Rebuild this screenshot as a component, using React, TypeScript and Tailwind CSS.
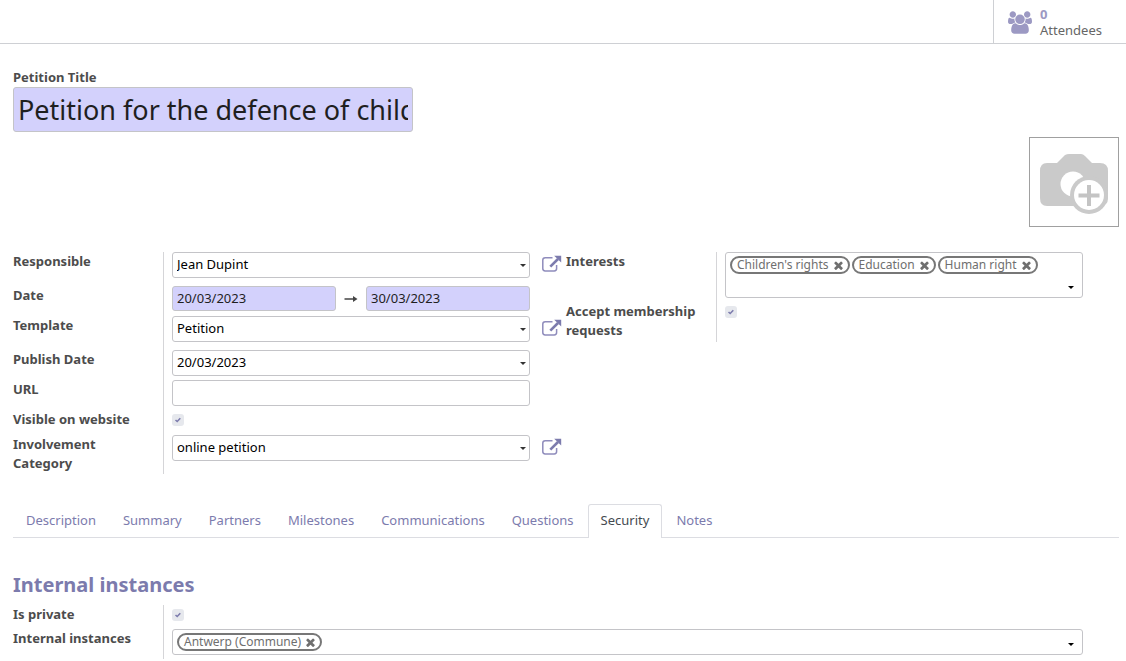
import React from "react";

const controlBase =
  "block w-full rounded-[3px] border border-[#c4c4c8] px-1 pb-0.5 text-[13px] leading-5 outline-none";

function UsersIcon() {
  return (
    <svg viewBox="64 0 1920 1792" className="h-[23px] w-6 shrink-0" fill="#9c99c3" aria-hidden="true">
      <path d="M657 896q-162 5-265 128h-134q-82 0-138-40.500t-56-118.500q0-353 124-353 6 0 43.500 21t97.500 42.500 119 21.500q67 0 133-23-5 37-5 66 0 139 81 256zm1071 637q0 120-73 189.500t-194 69.500h-874q-121 0-194-69.500t-73-189.500q0-53 3.500-103.500t14-109 26.500-108.500 43-97.500 62-81 85.500-53.500 111.500-20q10 0 43 21.500t73 48 107 48 135 21.500 135-21.500 107-48 73-48 43-21.500q61 0 111.500 20t85.500 53.500 62 81 43 97.500 26.500 108.500 14 109 3.500 103.500zm-1024-1277q0 106-75 181t-181 75-181-75-75-181 75-181 181-75 181 75 75 181zm704 384q0 159-112.500 271.500t-271.500 112.500-271.500-112.500-112.500-271.500 112.500-271.500 271.500-112.500 271.500 112.500 112.500 271.500zm576 225q0 78-56 118.500t-138 40.500h-134q-103-123-265-128 81-117 81-256 0-29-5-66 66 23 133 23 59 0 119-21.500t97.500-42.500 43.500-21q124 0 124 353zm-128-609q0 106-75 181t-181 75-181-75-75-181 75-181 181-75 181 75 75 181z" />
    </svg>
  );
}

function ExternalIcon() {
  return (
    <svg viewBox="0 0 20 18" className="h-[18px] w-5" fill="none" aria-hidden="true">
      <path
        d="M10.500 2.700H3.200Q.8 2.700.8 5.100V13.600Q.8 16 3.200 16H12.200Q14.600 16 14.600 13.600V10"
        stroke="#8f8cbc"
        strokeWidth="1.500"
      />
      <path d="M8.300 11.700 16 4" stroke="#7c7bad" strokeWidth="2.600" />
      <path d="M12.200.8H19.200V7.600Z" fill="#7c7bad" />
    </svg>
  );
}

function CrossIcon() {
  return (
    <svg viewBox="302 302 1188 1252" className="h-[9px] w-[9px]" fill="#6f6f6f" aria-hidden="true">
      <path d="M1490 1322q0 40-28 68l-136 136q-28 28-68 28t-68-28l-294-294-294 294q-28 28-68 28t-68-28l-136-136q-28-28-28-68t28-68l294-294-294-294q-28-28-28-68t28-68l136-136q28-28 68-28t68 28l294 294 294-294q28-28 68-28t68 28l136 136q28 28 28 68t-28 68l-294 294 294 294q28 28 28 68z" />
    </svg>
  );
}

function Caret({ className }: { className: string }) {
  return (
    <svg viewBox="0 0 6 3" className={`pointer-events-none absolute h-[3px] w-1.5 ${className}`} aria-hidden="true">
      <path d="M0 0H6L3 3Z" fill="currentColor" />
    </svg>
  );
}

function Row({
  label,
  id,
  height,
  action,
  children,
}: {
  label: string;
  id: string;
  height: string;
  action?: React.ReactNode;
  children: React.ReactNode;
}) {
  return (
    <div className={`flex ${height}`}>
      <label htmlFor={id} className="w-[150px] shrink-0 pr-3 font-bold leading-[19px] text-[#4c4c4c]">
        {label}
      </label>
      <div className="flex min-w-0 flex-1 items-start border-l border-[#d5d5d8] pl-2">
        <div className="min-w-0 flex-1">{children}</div>
        <div className="w-9 shrink-0 pl-3 pt-[3px]">{action}</div>
      </div>
    </div>
  );
}

function OpenButton({ label }: { label: string }) {
  return (
    <button type="button" aria-label={label} className="block">
      <ExternalIcon />
    </button>
  );
}

function Dropdown({ id, value }: { id: string; value: string }) {
  return (
    <div className="relative text-[#333]">
      <select id={id} defaultValue={value} className={`${controlBase} h-[26px] appearance-none bg-white text-black`}>
        <option>{value}</option>
      </select>
      <Caret className="right-1 top-3" />
    </div>
  );
}

function Check({ id }: { id: string }) {
  return (
    <div className="relative mt-1 h-3 w-3">
      <input
        id={id}
        type="checkbox"
        defaultChecked
        className="block h-3 w-3 appearance-none rounded-[3px] bg-[#e6e8ed]"
      />
      <svg viewBox="0 0 12 12" className="pointer-events-none absolute inset-0 h-3 w-3" fill="none" aria-hidden="true">
        <path d="M3.500 6 5.200 7.500 8.300 4.300" stroke="#7c7bad" strokeWidth="1.600" />
      </svg>
    </div>
  );
}

function TagBox({ id, tags, height }: { id: string; tags: string[]; height: string }) {
  return (
    <div className={`relative flex flex-wrap content-start gap-0.5 rounded-[3px] border border-[#c4c4c8] px-1 pt-[3px] ${height}`}>
      {tags.map((tag) => (
        <span
          key={tag}
          className="flex h-[18px] items-center gap-[5px] rounded-full border-2 border-[#777] px-[5px] text-xs leading-[14px] text-[#6f6f6f]"
        >
          {tag}
          <button type="button" aria-label={`Remove ${tag}`}>
            <CrossIcon />
          </button>
        </span>
      ))}
      <input id={id} className="h-[18px] w-10 min-w-0 flex-1 outline-none" />
      <Caret className="bottom-2 right-2 text-black" />
    </div>
  );
}

const tabs = [
  "Description",
  "Summary",
  "Partners",
  "Milestones",
  "Communications",
  "Questions",
  "Security",
  "Notes",
];

export default function App() {
  return (
    <div className="min-h-screen bg-white font-['Noto_Sans','Open_Sans',sans-serif] text-[13px] text-[#4c4c4c]">
      <header className="flex h-11 justify-end border-b border-[#ced0d4]">
        <button
          type="button"
          className="flex w-[133px] items-center gap-2 border-l border-[#ced0d4] pl-3.5 pt-0.5 text-left leading-4"
        >
          <UsersIcon />
          <span className="pb-0.5">
            <span className="block font-bold text-[#9c99c3]">0</span>
            <span className="block text-[#666]">Attendees</span>
          </span>
        </button>
      </header>

      <main className="pb-1 pl-[13px] pr-[7px] pt-[23px]">
        <label htmlFor="title" className="block font-bold leading-5">
          Petition Title
        </label>
        <input
          id="title"
          defaultValue="Petition for the defence of children"
          className="block h-[45px] w-[400px] rounded-[3px] border border-[#c4c4c8] bg-[#d3d1fc] px-1 text-[27px] text-[#1f1f1f] outline-none"
        />

        <div className="mt-[5px] flex justify-end">
          <button
            type="button"
            aria-label="Add image"
            className="flex h-[90px] w-[90px] items-center justify-center border border-[#a0a0a0] pt-1"
          >
            <svg viewBox="0 0 70 62" className="h-[62px] w-[70px]" aria-hidden="true">
              <path
                d="M8 10H18L26 2Q28 1 30 1H42Q44 1 46 3L53 10H61Q69 10 69 18V45Q69 53 61 53H8Q1 53 1 45V18Q1 10 8 10Z"
                fill="#cacaca"
              />
              <circle cx="34" cy="31" r="12.500" fill="#fff" />
              <circle cx="50" cy="42" r="19" fill="#cacaca" />
              <circle cx="50" cy="42" r="15" fill="#fff" />
              <path d="M50 32V53M39.500 42.500H60.500" stroke="#c4c4c4" strokeWidth="4" />
            </svg>
          </button>
        </div>

        <div className="mt-[25px] grid grid-cols-2 items-start">
          <div>
            <Row label="Responsible" id="responsible" height="h-[34px]" action={<OpenButton label="Open responsible" />}>
              <Dropdown id="responsible" value="Jean Dupint" />
            </Row>
            <Row label="Date" id="date" height="h-[30px]">
              <div className="flex items-center">
                <input
                  id="date"
                  defaultValue="20/03/2023"
                  className={`${controlBase} h-[25px] min-w-0 flex-1 bg-[#d3d1fc] text-[#1f1f1f]`}
                />
                <svg viewBox="0 0 30 10" className="h-2.5 w-[30px] shrink-0" aria-hidden="true">
                  <path d="M8.500 5H19" stroke="#444" strokeWidth="1.500" />
                  <path d="M17 2 21.500 5 17 8Z" fill="#444" />
                </svg>
                <input
                  aria-label="End date"
                  defaultValue="30/03/2023"
                  className={`${controlBase} h-[25px] min-w-0 flex-1 bg-[#d3d1fc] text-[#1f1f1f]`}
                />
              </div>
            </Row>
            <Row label="Template" id="template" height="h-[34px]" action={<OpenButton label="Open template" />}>
              <Dropdown id="template" value="Petition" />
            </Row>
            <Row label="Publish Date" id="publish" height="h-[30px]">
              <Dropdown id="publish" value="20/03/2023" />
            </Row>
            <Row label="URL" id="url" height="h-[30px]">
              <input id="url" className={`${controlBase} h-[26px] bg-white`} />
            </Row>
            <Row label="Visible on website" id="visible" height="h-[25px]">
              <Check id="visible" />
            </Row>
            <Row label="Involvement Category" id="category" height="h-[39px]" action={<OpenButton label="Open category" />}>
              <Dropdown id="category" value="online petition" />
            </Row>
          </div>
          <div>
            <Row label="Interests" id="interests" height="h-[50px]">
              <TagBox id="interests" tags={["Children's rights", "Education", "Human right"]} height="h-[46px]" />
            </Row>
            <Row label="Accept membership requests" id="accept" height="h-10">
              <Check id="accept" />
            </Row>
          </div>
        </div>

        <div role="tablist" className="mt-[30px] flex gap-px border-b border-[#dcdde2]">
          {tabs.map((tab) => (
            <button
              key={tab}
              type="button"
              role="tab"
              aria-selected={tab === "Security"}
              className={
                tab === "Security"
                  ? "-mb-px h-[34px] rounded-t-[3px] border border-b-0 border-[#dcdde2] bg-white px-3 pb-0.5 text-[#444a50]"
                  : "h-[33px] px-[13px] text-[#7c7bad]"
              }
            >
              {tab}
            </button>
          ))}
        </div>

        <section className="pt-[34px]">
          <h2 className="mb-2 text-xl font-bold leading-[25px] text-[#7c7bad]">Internal instances</h2>
          <Row label="Is private" id="private" height="h-6">
            <Check id="private" />
          </Row>
          <Row label="Internal instances" id="instances" height="h-[30px]">
            <TagBox id="instances" tags={["Antwerp (Commune)"]} height="h-[26px]" />
          </Row>
        </section>
      </main>
    </div>
  );
}
